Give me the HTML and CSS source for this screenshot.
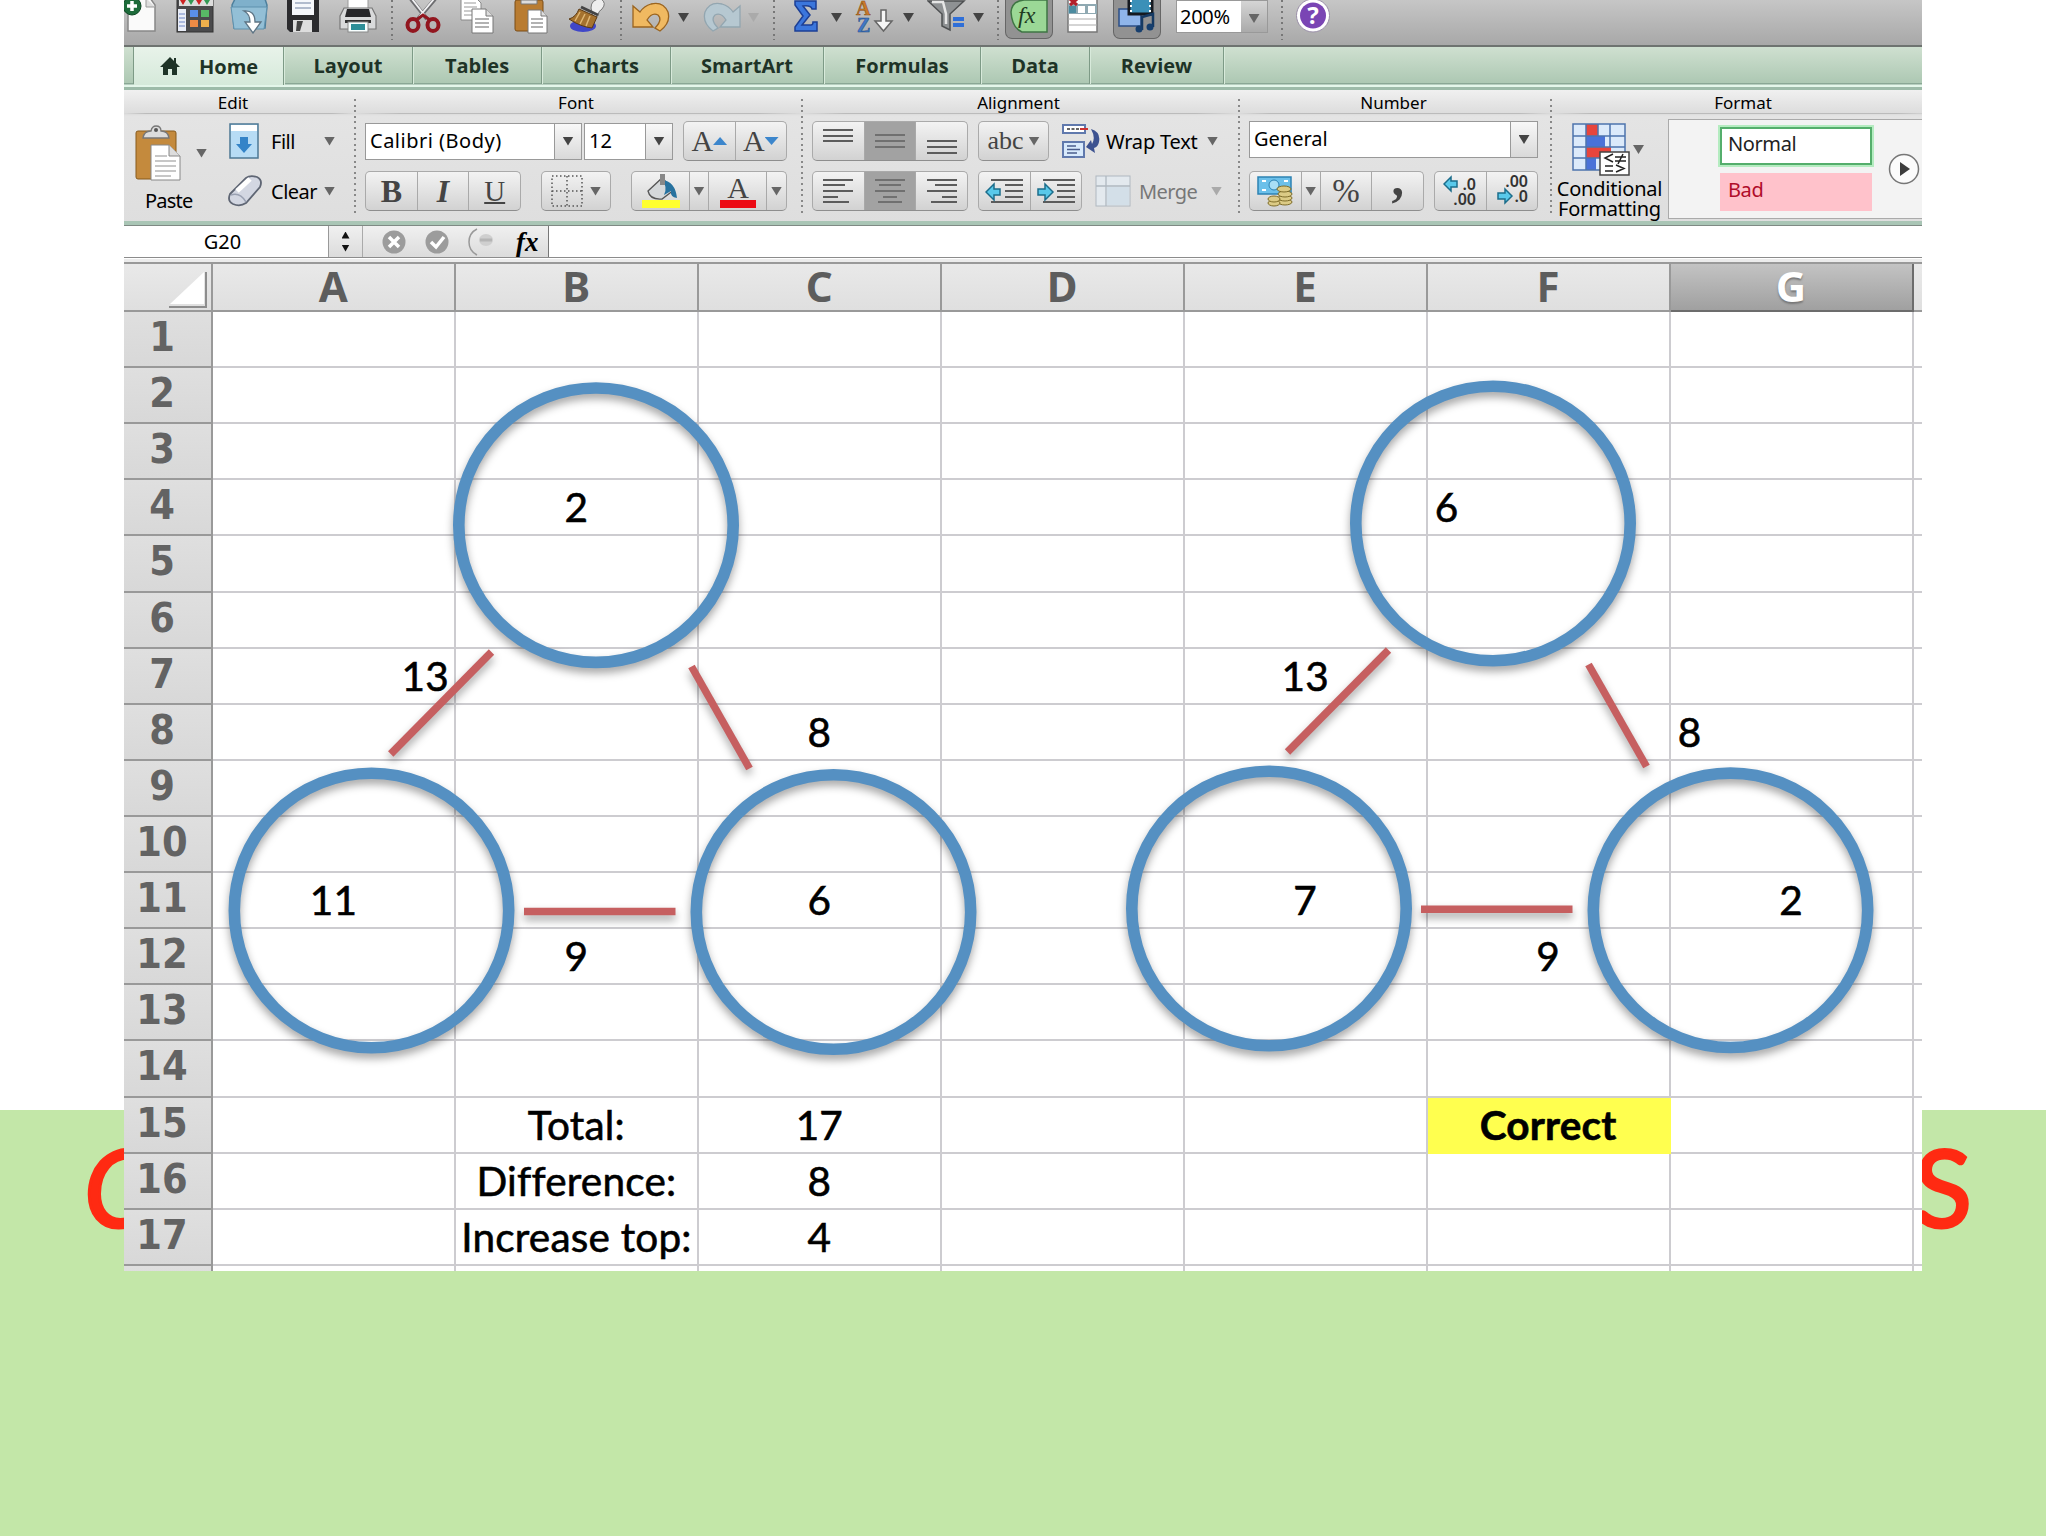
FILE: index.html
```html
<!DOCTYPE html>
<html lang="en">
<head>
    <meta charset="UTF-8">
    <meta name="viewport" content="width=device-width, initial-scale=1.0">
    <title>Arithmagons</title>
    <link rel="stylesheet" href="styles.css">
</head>
<body>
    <div class="band">
        <div class="band-title"><em>C</em><span>S</span></div>
    </div>

    <div class="window">
        <!-- Standard toolbar -->
        <div class="toolbar">
            <svg width="34" height="34" viewBox="0 0 34 34"><path d="M6 -2H26L31 5V31H4V4Z" fill="#fafafa" stroke="#888" stroke-width="1.5"/><path d="M22 -2V7H31" fill="#ddd" stroke="#999"/><circle cx="8" cy="6" r="9" fill="#1d6b3a" stroke="#0c4722"/><path d="M8 1V11M3 6H13" stroke="#fff" stroke-width="3.5"/></svg>
            <svg width="38" height="34" viewBox="0 0 38 34"><rect x="1" y="-4" width="36" height="36" fill="#4a4a4c" stroke="#333"/><rect x="2" y="9" width="8" height="22" fill="#e9edf7"/><path d="M3 14H9M3 18H9M3 22H9M3 26H9" stroke="#6c84c4"/><path d="M3 0H37V6H3Z" fill="#ddd"/><path d="M4 0L7 5L10 0M20 0L23 5L26 0" fill="#c22"/><path d="M12 0L15 5L18 0M28 0L31 5L34 0" fill="#395"/><rect x="14" y="10" width="8" height="7" fill="#5a8fe8"/><rect x="25" y="10" width="8" height="7" fill="#58b866"/><rect x="14" y="20" width="8" height="7" fill="#ef8b45"/><rect x="25" y="20" width="8" height="7" fill="#efb04c"/></svg>
            <svg width="38" height="34" viewBox="0 0 38 34"><path d="M2 5L5 -1H35L37 5L35 28H4Z" fill="#7fb0cb" stroke="#4d7f9c" stroke-width="1.5"/><path d="M1 7H37L34 29H4Z" fill="#93bfd6" stroke="#5f91ad"/><path d="M14 11Q25 10 25 22H31L23 33L15 22H20Q20 14 14 11Z" fill="#fff" stroke="#5d7484" stroke-width="1.3"/></svg>
            <svg width="34" height="34" viewBox="0 0 34 34"><path d="M1 -4H33V32H4L1 29Z" fill="#2b2b2e"/><rect x="6" y="-3" width="22" height="18" fill="#f5f7fb"/><path d="M9 3H25M9 8H25" stroke="#9aa8be" stroke-width="1.5"/><rect x="7" y="20" width="19" height="12" fill="#ddd"/><path d="M11 21H17L14 31H10Z" fill="#444"/></svg>
            <svg width="38" height="34" viewBox="0 0 38 34"><rect x="9" y="-4" width="20" height="14" fill="#fff" stroke="#999"/><path d="M5 8H33L37 16V29H1V16Z" fill="#d9dadb" stroke="#777" stroke-width="1.2"/><path d="M8 9H30L32 17H6Z" fill="#27272a"/><path d="M6 20H32V23H6Z" fill="#333"/><rect x="9" y="22" width="20" height="10" fill="#f8ffff" stroke="#888"/><path d="M12 24H26V30H12Z" fill="#2e8f98"/></svg>
            <i class="dots"></i>
            <svg width="36" height="34" viewBox="0 0 36 34"><path d="M6 -1L22 19M30 -1L13 19" stroke="#6d6d70" stroke-width="4"/><path d="M7 -1L21 17M29 -1L14 17" stroke="#f1f1f3" stroke-width="1.8"/><ellipse cx="8" cy="25" rx="5.5" ry="6" fill="none" stroke="#92161f" stroke-width="4"/><ellipse cx="28" cy="25" rx="5.5" ry="6" fill="none" stroke="#92161f" stroke-width="4"/><path d="M11 20L18 15L25 20" fill="none" stroke="#92161f" stroke-width="3"/></svg>
            <svg width="36" height="34" viewBox="0 0 36 34"><path d="M1 -3H15L21 3V20H1Z" fill="#fff" stroke="#888"/><path d="M4 3H16M4 7H17M4 11H17M4 15H12" stroke="#999"/><path d="M12 9H26L33 16V33H12Z" fill="#fff" stroke="#777"/><path d="M26 9V16H33" fill="#ddd" stroke="#777"/><path d="M15 19H29M15 23H29M15 27H29" stroke="#999" stroke-width="1.3"/></svg>
            <svg width="36" height="34" viewBox="0 0 36 34"><rect x="1" y="0" width="28" height="31" rx="2" fill="#b97c31" stroke="#7b4c16"/><path d="M7 4V0H23V4Z" fill="#ddd" stroke="#777"/><path d="M14 10H27L33 16V33H14Z" fill="#fff" stroke="#777"/><path d="M27 10V16H33" fill="#ddd" stroke="#777"/><path d="M17 19H29M17 23H29M17 27H29" stroke="#999" stroke-width="1.3"/></svg>
            <svg width="40" height="34" viewBox="0 0 40 34"><ellipse cx="16" cy="26" rx="13" ry="6" fill="#4047c8"/><path d="M24 8Q24 -1 34 -1Q40 3 35 9Q31 11 31 16L26 17Z" fill="#eee" stroke="#777"/><path d="M12 9L30 17L25 28Q14 27 2 19Q9 17 12 9Z" fill="#a5722e" stroke="#5b3a14"/><path d="M13 12L8 21M18 14L13 24M23 16L19 26" stroke="#dfb673" stroke-width="1.5"/><path d="M14 7L31 15" stroke="#444" stroke-width="3"/></svg>
            <i class="dots"></i>
            <svg width="40" height="34" viewBox="0 0 40 34"><path d="M2 6V27H22L16 20Q21 12 27 15Q32 20 24 28L29 31Q40 23 37 12Q32 1 20 4Q13 6 9 12Z" fill="#f0b961" stroke="#9a6420" stroke-width="1.3"/></svg>
            <i class="arrow dark"></i>
            <svg width="40" height="34" viewBox="0 0 40 34"><path d="M38 6V27H18L24 20Q19 12 13 15Q8 20 16 28L11 31Q0 23 3 12Q8 1 20 4Q27 6 31 12Z" fill="#b6c8d1" stroke="#93a6b0" stroke-width="1.3"/></svg>
            <i class="arrow faded"></i>
            <i class="dots"></i>
            <svg width="26" height="34" viewBox="0 0 26 34"><path d="M2 1H23V9H19Q18 5 10 6L17 15L9 25H18Q20 25 20 22H24V31H2V27L10 16L2 5Z" fill="#3b76dc" stroke="#1c3f95" stroke-width="1.5"/></svg>
            <i class="arrow dark"></i>
            <svg width="40" height="34" viewBox="0 0 40 34"><text x="1" y="15" class="az-a">A</text><text x="2" y="32" class="az-z">Z</text><path d="M26 10H31V21H37L28.500 31L20 21H26Z" fill="#f6f6f6" stroke="#666" stroke-width="1.5"/></svg>
            <i class="arrow dark"></i>
            <svg width="40" height="34" viewBox="0 0 40 34"><path d="M1 1H37L23 14V30L15 26V14Z" fill="#8e9193" stroke="#4e5052" stroke-width="1.5"/><path d="M5 2H16L19 14V24" fill="none" stroke="#e6e6e6" stroke-width="2.500"/><path d="M26 19H37M26 25H37" stroke="#2f6fd8" stroke-width="4"/></svg>
            <i class="arrow dark"></i>
            <i class="dots"></i>
            <div class="toggle"><svg width="38" height="34" viewBox="0 0 38 34"><path d="M1 12Q2 1 14 0H37V32H12Q2 28 1 12Z" fill="#9bd896" stroke="#3f7544" stroke-width="1.5"/><text x="8" y="23" class="fx-small">fx</text></svg></div>
            <svg width="32" height="34" viewBox="0 0 32 34"><rect x="1" y="-3" width="29" height="35" fill="#fff" stroke="#777" stroke-width="1.5"/><path d="M1 4H30V14H1Z" fill="#8fa9b2"/><rect x="2" y="6" width="7" height="7" fill="#4b8ba0"/><rect x="11" y="6" width="7" height="7" fill="#fff"/><rect x="21" y="6" width="7" height="7" fill="#fff"/><path d="M3 -1L10 5M10 -1L3 5" stroke="#b21f2a" stroke-width="3"/><path d="M1 19H30M1 25H30" stroke="#aaa"/></svg>
            <div class="toggle"><svg width="38" height="34" viewBox="0 0 38 34"><rect x="1" y="9" width="22" height="17" fill="#8fb5ea" stroke="#2d4f86" stroke-width="1.5"/><rect x="11" y="-3" width="23" height="17" fill="#3b90b8" stroke="#15191f" stroke-width="3"/><path d="M13 0V13M32 0V13" stroke="#fff" stroke-dasharray="2 3" stroke-width="2"/><path d="M24 30V17L35 14V27" fill="none" stroke="#163a63" stroke-width="2.500"/><circle cx="21" cy="29" r="3.500" fill="#173f6e"/><circle cx="32" cy="27" r="3.500" fill="#173f6e"/></svg></div>
            <div class="zoom-box"><span>200%</span><b><i class="arrow"></i></b></div>
            <i class="dots"></i>
            <svg width="36" height="34" viewBox="0 0 36 34"><circle cx="18" cy="15.500" r="16.500" fill="#fff" stroke="#9a8fa8"/><circle cx="18" cy="15.500" r="13" fill="#7a45b4"/><text x="18" y="24" class="help-mark">?</text></svg>
        </div>

        <!-- Ribbon tabs -->
        <div class="tabs">
            <div class="tab stub"></div>
            <div class="tab home"><svg width="20" height="20" viewBox="0 0 20 20"><path d="M10 1L0 11H3V19H8V13H12V19H17V11H20L16 7V2H14V5Z" fill="#1e3327"/></svg>Home</div>
            <div class="tab layout">Layout</div>
            <div class="tab tables">Tables</div>
            <div class="tab charts">Charts</div>
            <div class="tab smartart">SmartArt</div>
            <div class="tab formulas">Formulas</div>
            <div class="tab data">Data</div>
            <div class="tab review">Review</div>
        </div>

        <!-- Ribbon -->
        <div class="ribbon">
            <div class="group edit">
                <h4>Edit</h4>
                <div class="edit-body">
                    <div class="paste">
                        <div class="paste-top">
                            <svg width="46" height="56" viewBox="0 0 46 56"><rect x="1" y="6" width="40" height="48" rx="2" fill="#c48a3d" stroke="#875a1d"/><path d="M8 13Q9 6 16 6Q17 1 21 1Q26 1 26 6Q33 6 34 13Z" fill="#dcdcdc" stroke="#777" stroke-width="1.300"/><circle cx="21" cy="5" r="2" fill="#555"/><path d="M16 20H34L45 31V55H16Z" fill="#fff" stroke="#888"/><path d="M34 20V31H45" fill="#ddd" stroke="#888"/><path d="M20 31H32M20 36H41M20 41H41M20 46H41M20 51H36" stroke="#b5b5b5" stroke-width="1.300"/></svg>
                            <i class="arrow"></i>
                        </div>
                        <span>Paste</span>
                    </div>
                    <div class="edit-items">
                        <div class="line"><svg class="fill-icon" width="30" height="36" viewBox="0 0 30 36"><rect x="1" y="1" width="28" height="34" fill="#b7dcf5" stroke="#4d7894" stroke-width="1.500"/><rect x="2" y="2" width="26" height="6" fill="#fff"/><path d="M11 14H19V21H23L15 30L7 21H11Z" fill="#3484c8"/></svg><span>Fill</span><i class="arrow"></i></div>
                        <div class="line"><svg class="clear-icon" width="36" height="34" viewBox="0 0 36 34"><path d="M3 20L19 4Q23 1 30 3Q36 6 33 13L19 29Q13 33 6 30Q0 27 3 20Z" fill="#d3d7e2" stroke="#5f6674" stroke-width="1.800"/><path d="M4 21Q13 18 19 28" fill="none" stroke="#9aa1b2" stroke-width="1.500"/><path d="M10 17L23 5" stroke="#fff" stroke-width="5"/></svg><span>Clear</span><i class="arrow"></i></div>
                    </div>
                </div>
            </div>
            <i class="divider"></i>

            <div class="group font">
                <h4>Font</h4>
                <div class="line">
                    <div class="combo family"><span>Calibri (Body)</span><b><i class="arrow"></i></b></div>
                    <div class="combo size"><span>12</span><b><i class="arrow"></i></b></div>
                    <div class="buttons grow">
                        <div><span class="serif">A</span><i class="arrow up blue"></i></div>
                        <div><span class="serif">A</span><i class="arrow blue"></i></div>
                    </div>
                </div>
                <div class="line">
                    <div class="buttons biu">
                        <div class="serif bold">B</div>
                        <div class="serif italic">I</div>
                        <div class="serif under">U</div>
                    </div>
                    <div class="buttons borders">
                        <div><svg width="32" height="32" viewBox="0 0 32 32"><path d="M1 1H31V31H1ZM16 1V31M1 16H31" fill="none" stroke="#555" stroke-width="1.500" stroke-dasharray="1.500 2.500"/></svg><i class="arrow"></i></div>
                    </div>
                    <div class="buttons colors">
                        <div class="wide"><svg width="38" height="36" viewBox="0 0 38 36"><rect x="0" y="27" width="38" height="8" fill="#ffff2e"/><path d="M6 18L20 5L32 17L20 26Q8 27 6 18Z" fill="#d5d8da" stroke="#555" stroke-width="1.300"/><path d="M20 7Q33 8 35 25Q28 24 29 18L22 22Q26 14 20 7Z" fill="#27729f"/><path d="M18 1H23V12H18Z" fill="#888"/></svg></div>
                        <div class="slim"><i class="arrow"></i></div>
                        <div class="wide"><svg width="36" height="36" viewBox="0 0 36 36"><rect x="0" y="27" width="36" height="8" fill="#ec0a14"/><text x="18" y="25" class="font-a">A</text></svg></div>
                        <div class="slim"><i class="arrow"></i></div>
                    </div>
                </div>
            </div>
            <i class="divider"></i>

            <div class="group alignment">
                <h4>Alignment</h4>
                <div class="line">
                    <div class="buttons trio">
                        <div><svg width="30" height="28" viewBox="0 0 30 28"><path d="M0 3H30M0 9H30M0 14H30"/></svg></div>
                        <div class="on"><svg width="30" height="28" viewBox="0 0 30 28"><path d="M0 8H30M0 14H30M0 20H30"/></svg></div>
                        <div><svg width="30" height="28" viewBox="0 0 30 28"><path d="M0 14H30M0 20H30M0 26H30"/></svg></div>
                    </div>
                    <div class="buttons abc"><div><span class="serif">abc</span><i class="arrow"></i></div></div>
                    <svg class="wrap-icon" width="38" height="36" viewBox="0 0 38 36"><rect x="1" y="2" width="22" height="8" fill="#fff" stroke="#6079ad" stroke-width="2"/><path d="M5 6H17" stroke="#333" stroke-width="1.500" stroke-dasharray="3 1.500"/><path d="M18 6H26" stroke="#c33" stroke-width="2"/><rect x="1" y="19" width="21" height="15" fill="#d8eafc" stroke="#6079ad" stroke-width="2"/><path d="M5 23H14M5 26.500H18M5 30H15" stroke="#4a5d8c" stroke-width="1.500"/><path d="M29 6Q39 9 37 19Q36 24 32 25L33 30L24 24L29 17L30 21Q34 15 29 6Z" fill="#3d5290"/></svg>
                    <span class="wrap-label">Wrap Text</span><i class="arrow"></i>
                </div>
                <div class="line">
                    <div class="buttons trio">
                        <div><svg width="30" height="28" viewBox="0 0 30 28"><path d="M0 3H30M0 8H22M0 14H30M0 20H15M0 25H26"/></svg></div>
                        <div class="on"><svg width="30" height="28" viewBox="0 0 30 28"><path d="M0 3H30M4 8H26M0 14H30M8 20H22M3 25H27"/></svg></div>
                        <div><svg width="30" height="28" viewBox="0 0 30 28"><path d="M0 3H30M8 8H30M0 14H30M15 20H30M4 25H30"/></svg></div>
                    </div>
                    <div class="buttons indent">
                        <div><svg width="38" height="28" viewBox="0 0 38 28"><path d="M6 3H38M20 8H38M20 14H38M20 20H38M6 25H38"/><path class="cyan" d="M1 15L9 7V12H15V18H9V23Z"/></svg></div>
                        <div><svg width="38" height="28" viewBox="0 0 38 28"><path d="M6 3H38M20 8H38M20 14H38M20 20H38M6 25H38"/><path class="cyan" d="M16 15L8 7V12H1V18H8V23Z"/></svg></div>
                    </div>
                    <svg class="merge-icon" width="36" height="32" viewBox="0 0 36 32"><rect x="1" y="1" width="34" height="30" fill="#e3e9ee" stroke="#b0b8c0"/><path d="M1 11H35M11 1V31" stroke="#b0b8c0" stroke-width="1.300"/><rect x="12" y="12" width="22" height="18" fill="#d3dfe8"/></svg>
                    <span class="merge-label">Merge</span><i class="arrow faded"></i>
                </div>
            </div>
            <i class="divider"></i>

            <div class="group number">
                <h4>Number</h4>
                <div class="line">
                    <div class="combo format-name"><span>General</span><b><i class="arrow"></i></b></div>
                </div>
                <div class="line">
                    <div class="buttons currency">
                        <div class="money"><svg width="36" height="32" viewBox="0 0 36 32"><rect x="1" y="2" width="33" height="17" fill="#6cc0ea" stroke="#2c82b3" stroke-width="1.500"/><path d="M5 6H9M5 15H9M27 6H31" stroke="#fff" stroke-width="2"/><circle cx="17" cy="10" r="5" fill="#a8def5" stroke="#2c82b3"/><g fill="#dccb86" stroke="#7f6d2a"><ellipse cx="28" cy="27" rx="7" ry="3"/><ellipse cx="28" cy="23" rx="7" ry="3"/><ellipse cx="28" cy="19" rx="7" ry="3"/><ellipse cx="27" cy="14" rx="7" ry="3"/><ellipse cx="17" cy="28" rx="6" ry="3"/><ellipse cx="17" cy="24" rx="6" ry="3"/></g></svg></div>
                        <div class="slim"><i class="arrow"></i></div>
                        <div class="percent">%</div>
                        <div class="comma">,</div>
                    </div>
                    <div class="buttons decimals">
                        <div><svg width="34" height="34" viewBox="0 0 34 34"><path class="cyan" d="M1 10L8 3V7H14V13H8V17Z"/><text x="33" y="16">.0</text><text x="33" y="31">.00</text></svg></div>
                        <div><svg width="34" height="34" viewBox="0 0 34 34"><text x="33" y="13">.00</text><path class="cyan" d="M17 22L10 15V19H3V25H10V29Z"/><text x="33" y="28">.0</text></svg></div>
                    </div>
                </div>
            </div>
            <i class="divider"></i>

            <div class="group format">
                <h4>Format</h4>
                <div class="format-body">
                    <div class="conditional">
                        <div class="cond-top">
                            <svg width="58" height="53" viewBox="0 0 58 53"><rect x="1" y="1" width="52" height="46" fill="#dceafa"/><rect x="14" y="1" width="12" height="12" fill="#e8453c"/><rect x="14" y="13" width="19" height="11" fill="#4a72d8"/><rect x="14" y="24" width="25" height="11" fill="#e8453c"/><rect x="14" y="35" width="10" height="12" fill="#4a72d8"/><path d="M1 1H53V47H1ZM1 13H53M1 24H53M1 35H53M14 1V47M26 1V13M38 1V24" fill="none" stroke="#4d74ad" stroke-width="1.500"/><rect x="28" y="29" width="29" height="23" fill="#fff" stroke="#444" stroke-width="1.500"/><path d="M41 31L33 35L41 39M33 43H41M33 48H41M43 34H54M43 38H54M51 31L46 41M44 42L52 45.500L44 49" fill="none" stroke="#222" stroke-width="1.500"/></svg>
                            <i class="arrow"></i>
                        </div>
                        <span>Conditional<br>Formatting</span>
                    </div>
                    <div class="gallery">
                        <div class="styles">
                            <div class="normal">Normal</div>
                            <div class="bad">Bad</div>
                        </div>
                        <svg width="32" height="32" viewBox="0 0 32 32"><circle cx="16" cy="16" r="14.500" fill="#fbfbfb" stroke="#777" stroke-width="1.500"/><path d="M12 9L22 16L12 23Z" fill="#3c3c3c"/></svg>
                    </div>
                </div>
            </div>
        </div>

        <!-- Formula bar -->
        <div class="formula-bar">
            <div class="name-box">G20</div>
            <div class="stepper"><i class="arrow up"></i><i class="arrow"></i></div>
            <div class="formula-tools">
                <svg width="24" height="24" viewBox="0 0 24 24"><circle cx="12" cy="12" r="11.500" fill="#9c9c9c"/><path d="M7 7L17 17M17 7L7 17" stroke="#fff" stroke-width="3.500"/></svg>
                <svg width="24" height="24" viewBox="0 0 24 24"><circle cx="12" cy="12" r="11.500" fill="#9c9c9c"/><path d="M6 12L11 17L19 7" fill="none" stroke="#fff" stroke-width="3.500"/></svg>
                <svg width="28" height="28" viewBox="0 0 28 28"><path d="M9 1Q1 5 1 14Q1 23 9 27" fill="none" stroke="#999" stroke-width="1.500"/><ellipse cx="18" cy="12" rx="7" ry="6" fill="#cfcfcf"/><path d="M12 12H24" stroke="#b5b5b5" stroke-width="3"/></svg>
                <span>fx</span>
            </div>
            <div class="formula-input"></div>
        </div>

        <!-- Worksheet -->
        <div class="sheet">
            <div class="row head">
                <div class="corner"><svg width="40" height="38" viewBox="0 0 40 38"><path d="M40 2V38H2" fill="none" stroke="#8d8d8d" stroke-width="4"/><path d="M37 2V34H3Z" fill="#fff"/></svg></div>
                <div>A</div><div>B</div><div>C</div><div>D</div><div>E</div><div>F</div><div class="active">G</div><div class="rest"></div>
            </div>
            <div class="row"><b>1</b><div></div><div></div><div></div><div></div><div></div><div></div><div></div><div></div></div>
            <div class="row"><b>2</b><div></div><div></div><div></div><div></div><div></div><div></div><div></div><div></div></div>
            <div class="row"><b>3</b><div></div><div></div><div></div><div></div><div></div><div></div><div></div><div></div></div>
            <div class="row"><b>4</b><div></div><div>2</div><div></div><div></div><div></div><div class="left">6</div><div></div><div></div></div>
            <div class="row"><b>5</b><div></div><div></div><div></div><div></div><div></div><div></div><div></div><div></div></div>
            <div class="row"><b>6</b><div></div><div></div><div></div><div></div><div></div><div></div><div></div><div></div></div>
            <div class="row"><b>7</b><div class="right">13</div><div></div><div></div><div></div><div>13</div><div></div><div></div><div></div></div>
            <div class="row"><b>8</b><div></div><div></div><div>8</div><div></div><div></div><div></div><div class="left">8</div><div></div></div>
            <div class="row"><b>9</b><div></div><div></div><div></div><div></div><div></div><div></div><div></div><div></div></div>
            <div class="row"><b>10</b><div></div><div></div><div></div><div></div><div></div><div></div><div></div><div></div></div>
            <div class="row"><b>11</b><div>11</div><div></div><div>6</div><div></div><div>7</div><div></div><div>2</div><div></div></div>
            <div class="row"><b>12</b><div></div><div>9</div><div></div><div></div><div></div><div>9</div><div></div><div></div></div>
            <div class="row"><b>13</b><div></div><div></div><div></div><div></div><div></div><div></div><div></div><div></div></div>
            <div class="row"><b>14</b><div></div><div></div><div></div><div></div><div></div><div></div><div></div><div></div></div>
            <div class="row"><b>15</b><div></div><div>Total:</div><div>17</div><div></div><div></div><div class="correct">Correct</div><div></div><div></div></div>
            <div class="row"><b>16</b><div></div><div>Difference:</div><div>8</div><div></div><div></div><div></div><div></div><div></div></div>
            <div class="row"><b>17</b><div></div><div>Increase top:</div><div>4</div><div></div><div></div><div></div><div></div><div></div></div>
            <div class="row"><b></b><div></div><div></div><div></div><div></div><div></div><div></div><div></div><div></div></div>

            <!-- Shapes drawn on top of the cells -->
            <svg class="shapes" width="1798" height="1008" viewBox="124 263.500 1798 1008">
                <g class="circles">
                    <circle cx="596" cy="524.700" r="137.200"/>
                    <circle cx="371.500" cy="910" r="137.200"/>
                    <circle cx="833.500" cy="911.500" r="137.200"/>
                    <circle cx="1493" cy="523" r="137.200"/>
                    <circle cx="1269" cy="908" r="137.200"/>
                    <circle cx="1730.500" cy="909.800" r="137.200"/>
                </g>
                <g class="links">
                    <path d="M390.700 753.500L491.500 651.500"/>
                    <path d="M691.500 666L749.500 768"/>
                    <path d="M524 911H675.500"/>
                    <path d="M1287.500 751.500L1388.500 649.500"/>
                    <path d="M1588.500 664L1646.500 766"/>
                    <path d="M1421 908.700H1572.500"/>
                </g>
            </svg>
        </div>
    </div>
</body>
</html>
```
FILE: styles.css
```css
* {
    margin: 0;
    padding: 0;
    box-sizing: border-box;
}

body {
    width: 2048px;
    height: 1536px;
    position: relative;
    overflow: hidden;
    background: #ffffff;
    color: #000;
    font-family: "Noto Sans", "Open Sans", sans-serif;
    font-size: 20px;
}

svg {
    display: block;
    flex: none;
}

/* Slide background */
.band {
    position: absolute;
    left: 0;
    top: 1110px;
    width: 2046px;
    height: 426px;
    background: #c3e7a8;
}

.band-title {
    display: flex;
    justify-content: space-between;
    padding: 8px 74px 0 84px;
    font-family: Lato, sans-serif;
    font-size: 107px;
    line-height: 136px;
    color: #ff2a12;
    -webkit-text-stroke: 3px #ff2a12;
}

/* Excel window */
.window {
    position: relative;
    width: 1798px;
    height: 1271px;
    margin-left: 124px;
    overflow: hidden;
    background: #fff;
}

.arrow {
    flex: none;
    width: 11px;
    height: 9px;
    background: #666;
    clip-path: polygon(0 0, 100% 0, 50% 100%);
}

.arrow.dark {
    background: #444;
}

.arrow.up {
    clip-path: polygon(0 100%, 100% 100%, 50% 0);
}

.arrow.blue {
    background: #3c86cc;
}

.arrow.faded {
    background: #aaa;
}

/* Toolbar */
.toolbar {
    display: grid;
    grid-template-columns: 52px 54px 56px 53px 51px 15px 55px 54px 53px 52px 12px 47px 24px 46px 24px 21px 38px 24px 48px 24px 46px 23px 9px 62px 46px 63px 104px 15px auto;
    align-items: start;
    height: 47px;
    background: linear-gradient(#c6c6c6, #a8a8a8);
    border-bottom: 2px solid #6e7370;
}

.toolbar .arrow {
    margin-top: 13px;
}

.dots {
    width: 2px;
    height: 40px;
    margin-left: 1px;
    background: repeating-linear-gradient(#777 0 2px, transparent 2px 5.600px);
}

.toggle {
    width: 48px;
    height: 39px;
    padding-left: 4px;
    background: #929292;
    border: 1px solid #666;
    border-top: none;
    border-radius: 0 0 7px 7px;
}

.az-a, .az-z {
    font: bold 20px "Liberation Serif", serif;
    fill: #c97a2b;
    stroke: #8a4d12;
    stroke-width: 0.500px;
}

.az-z {
    fill: #4178c4;
    stroke: #234b85;
}

.fx-small {
    font: italic 24px "Liberation Serif", serif;
    fill: #1f3a22;
}

.help-mark {
    font: bold 24px "Noto Sans", sans-serif;
    fill: #fff;
    text-anchor: middle;
}

.zoom-box {
    display: flex;
    width: 92px;
    height: 33px;
    background: #fff;
    border: 1px solid #999;
    line-height: 32px;
}

.zoom-box span {
    width: 64px;
    padding-left: 3px;
    letter-spacing: -0.300px;
}

.zoom-box b {
    flex: 1;
    display: flex;
    justify-content: center;
    background: linear-gradient(#d5d5d5, #aaa);
}

/* Tabs */
.tabs {
    display: flex;
    height: 43px;
    background: linear-gradient(#cfe0d0, #adc8b3 36px, #8aa795 36px, #8aa795 37px, #e4f6ea 38px, #e4f6ea 40px, #9dbba9 40px);
}

.tab {
    height: 37px;
    border-right: 1px solid #7d9a86;
    box-shadow: 1px 0 0 #d8eadb;
    line-height: 37px;
    text-align: center;
    font-family: "Open Sans", sans-serif;
    font-size: 20px;
    font-weight: 700;
    color: #1e3327;
}

.stub { width: 10px; }

.home {
    display: flex;
    align-items: center;
    width: 150px;
    height: 38px;
    padding-left: 26px;
    gap: 19px;
    background: linear-gradient(#e8f3ea, #d5e9da);
}

.layout { width: 129px; }
.tables { width: 129px; }
.charts { width: 129px; }
.smartart { width: 153px; }
.formulas { width: 157px; }
.data { width: 109px; }
.review { width: 134px; }

/* Ribbon */
.ribbon {
    display: flex;
    height: 136px;
    background: linear-gradient(#f0f0f0, #dcdcdc 24px, #e4e4e4 26px, #dedede);
    border-bottom: 1px solid #7f8a84;
    box-shadow: inset 0 -4px 0 #a9c5b5;
}

.divider {
    flex: none;
    width: 2px;
    height: 116px;
    margin-top: 9px;
    background: repeating-linear-gradient(#888 0 2px, transparent 2px 5.600px);
}

.group {
    flex: none;
}

.group h4 {
    height: 24px;
    margin-bottom: 7px;
    border-bottom: 1px solid;
    border-image: linear-gradient(90deg, transparent, #bbb 10%, #bbb 90%, transparent) 1;
    font-size: 17px;
    font-weight: 400;
    line-height: 26px;
    text-align: center;
}

.line {
    display: flex;
    align-items: center;
    height: 40px;
    margin-bottom: 10px;
}

.edit { width: 230px; }
.edit h4 { padding-right: 12px; }

.edit-body {
    display: flex;
}

.paste {
    width: 103px;
    padding: 4px 0 0 11px;
}

.paste-top {
    display: flex;
    align-items: center;
    gap: 15px;
}

.paste span {
    display: block;
    padding-left: 10px;
    line-height: 40px;
    letter-spacing: -0.800px;
}

.fill-icon {
    margin: 0 12px 0 2px;
}

.clear-icon {
    margin-right: 8px;
}

.edit-items span {
    width: 53px;
    letter-spacing: -0.500px;
}

.font { width: 445px; }
.font .line { padding-left: 9px; }
.font h4 { padding-right: 5px; }

.combo {
    display: flex;
    height: 37px;
    background: #fff;
    border: 1.500px solid #999;
    line-height: 34px;
}

.combo span {
    flex: 1;
    padding-left: 4px;
}

.combo b {
    display: flex;
    align-items: center;
    justify-content: center;
    width: 27px;
    background: linear-gradient(#f8f8f8, #d9d9d9);
    border-left: 1px solid #999;
}

.combo .arrow {
    background: #444;
}

.family { width: 217px; }

.family span {
    letter-spacing: 0.500px;
}

.size {
    width: 89px;
    margin: 0 10px 0 2px;
}

.buttons {
    display: flex;
    height: 40px;
    background: linear-gradient(#f3f3f3, #d2d2d2);
    border: 1px solid #aaa;
    border-bottom-color: #8e8e8e;
    border-radius: 5px;
    overflow: hidden;
}

.buttons > div {
    flex: 1;
    display: flex;
    align-items: center;
    justify-content: center;
    border-right: 1px solid #a9a9a9;
}

.buttons > div:last-child {
    border-right: none;
}

.serif {
    font-family: "Liberation Serif", serif;
    font-size: 32px;
    line-height: 36px;
    color: #444;
}

.bold { font-weight: 700; }
.italic { font-style: italic; font-weight: 700; }
.under { text-decoration: underline; text-decoration-thickness: 1.500px; }

.grow { width: 104px; }
.grow .arrow { width: 14px; height: 8px; }
.grow .serif { font-size: 30px; }

.biu {
    width: 156px;
    margin-right: 20px;
}

.biu .under {
    font-size: 29px;
}

.borders {
    width: 70px;
    margin-right: 20px;
}

.borders > div { gap: 7px; }
.colors { width: 156px; }

.buttons > .slim {
    flex: none;
    width: 19px;
}

.font-a {
    font: 30px "Liberation Serif", serif;
    fill: #444;
    text-anchor: middle;
}

.alignment { width: 435px; }
.alignment .line { padding-left: 9px; }
.alignment h4 { padding-right: 4px; }

.trio {
    width: 156px;
    margin-right: 10px;
}

.trio .on {
    background: #a2a2a2;
}

.trio path, .indent path {
    stroke: #5c5c5c;
    stroke-width: 2.200px;
}

.trio .on path {
    stroke: #707070;
}

.abc {
    width: 71px;
    margin-right: 13px;
}

.abc > div { gap: 5px; }

.abc .serif {
    font-size: 26px;
    line-height: 32px;
}

.wrap-label {
    width: 107px;
    padding-left: 6px;
    letter-spacing: -0.200px;
    white-space: nowrap;
}

.indent {
    width: 104px;
    margin-right: 13px;
}

.indent .cyan, .cyan {
    fill: #59c9ea;
    stroke: #1c6d8b;
    stroke-width: 1.500px;
}

.merge-label {
    width: 80px;
    padding-left: 8px;
    color: #777;
    letter-spacing: -0.600px;
}

.number { width: 310px; }
.number .line { padding-left: 9px; }
.number h4 { padding-right: 3px; }
.format-name { width: 289px; }
.number .combo { margin-bottom: 3px; }

.currency {
    width: 175px;
    margin-right: 10px;
}

.percent, .comma {
    font-family: "Liberation Serif", serif;
    font-size: 33px;
    color: #444;
}

.buttons > .comma {
    padding-bottom: 26px;
    font: bold 50px "Liberation Serif", serif;
}

.decimals { width: 104px; }

.decimals text {
    font: 600 16px "Noto Sans", sans-serif;
    fill: #333;
    text-anchor: end;
}

.format { width: 382px; }

.format-body {
    display: flex;
    margin-top: -2px;
}

.conditional {
    width: 116px;
    padding-top: 4px;
    text-align: center;
}

.cond-top {
    display: flex;
    align-items: center;
    gap: 3px;
    padding-left: 20px;
}

.conditional span {
    display: block;
    margin: 3px -4px 0 -5px;
    line-height: 20px;
    letter-spacing: -0.200px;
}

.gallery {
    display: flex;
    align-items: center;
    gap: 16px;
    flex: 1;
    height: 100px;
    padding-left: 51px;
    background: #f3f3f3;
    border: 1.500px solid #aaa;
}

.styles {
    width: 152px;
}

.normal, .bad {
    height: 38px;
    padding-left: 6px;
    line-height: 29px;
    letter-spacing: -0.400px;
}

.normal {
    margin-bottom: 8px;
    background: #fff;
    border: 2px solid #55ae6c;
    box-shadow: 0 0 0 2px #b4ecc0;
    color: #222;
}

.bad {
    padding-left: 8px;
    line-height: 33px;
    background: #ffc2cb;
    color: #b00d2a;
}

/* Formula bar */
.formula-bar {
    display: flex;
    height: 32px;
    background: linear-gradient(#f0f0f0, #dcdcdc);
    border-bottom: 1.500px solid #8c8c8c;
}

.name-box {
    width: 205px;
    padding-right: 7px;
    background: #fff;
    border-right: 1px solid #999;
    text-align: center;
    line-height: 31px;
}

.stepper {
    display: flex;
    flex-direction: column;
    align-items: center;
    justify-content: center;
    gap: 6px;
    width: 34px;
    border-right: 1px solid #aaa;
}

.stepper .arrow {
    width: 8px;
    height: 7px;
    background: #111;
}

.formula-tools {
    display: flex;
    align-items: center;
    gap: 19px;
    width: 186px;
    padding-left: 19px;
    border-right: 1.500px solid #777;
}

.formula-tools span {
    margin-left: 1px;
    font: italic bold 27px "Liberation Serif", serif;
    line-height: 28px;
}

.formula-input {
    flex: 1;
    background: #fff;
}

/* Worksheet */
.sheet {
    position: relative;
    margin-top: 3.500px;
    border-top: 2px solid #999;
    box-shadow: 0 -3px 0 #ececec;
}

.row {
    display: flex;
    width: 1999px;
    height: 56.120px;
}

.row > b {
    flex: none;
    width: 89px;
    padding-right: 11px;
    background: linear-gradient(#dfdfdf, #d8d8d8);
    border-right: 2px solid #999;
    border-bottom: 2px solid #999;
    text-align: center;
    font-family: "DejaVu Sans Condensed", "DejaVu Sans", sans-serif;
    font-stretch: condensed;
    font-size: 41px;
    line-height: 51px;
    color: #636363;
}

.row > div {
    flex: none;
    width: 242.950px;
    border-right: 2px solid #cdccd0;
    border-bottom: 2px solid #cdccd0;
    text-align: center;
    font-family: Lato, sans-serif;
    font-size: 40.500px;
    line-height: 54px;
    letter-spacing: 0.200px;
    white-space: nowrap;
    -webkit-text-stroke: 0.600px #000;
}

.row > .left {
    padding-left: 7px;
    text-align: left;
}

.row > .right {
    padding-right: 5px;
    text-align: right;
}

.row > .correct {
    background: #ffff4f;
    border-color: #ffff4f;
    font-weight: 700;
}

.row.head {
    height: 48.500px;
}

.head > div {
    background: linear-gradient(#e9e9e9, #dfdfdf);
    border-right: 2px solid #999;
    border-bottom: 2px solid #999;
    font-family: "Noto Sans", sans-serif;
    font-size: 42px;
    font-weight: 700;
    line-height: 43px;
    color: #5d5d5d;
    -webkit-text-stroke: 0;
}

.head > .corner {
    display: flex;
    justify-content: flex-end;
    width: 89px;
    padding: 6px 4px 0 0;
}

.head > .active {
    background: linear-gradient(#c3c3c3, #a0a0a0);
    border-color: #6c6c6c;
    color: #fff;
    text-shadow: 0 2px 2px #777;
}

.shapes {
    position: absolute;
    left: 0;
    top: 0;
}

.circles, .links {
    fill: none;
    stroke: #5590c2;
    stroke-width: 11.600px;
    filter: drop-shadow(0 5px 4px rgba(0, 0, 0, 0.350));
}

.links {
    stroke: #c65f60;
    stroke-width: 7.500px;
}
```
